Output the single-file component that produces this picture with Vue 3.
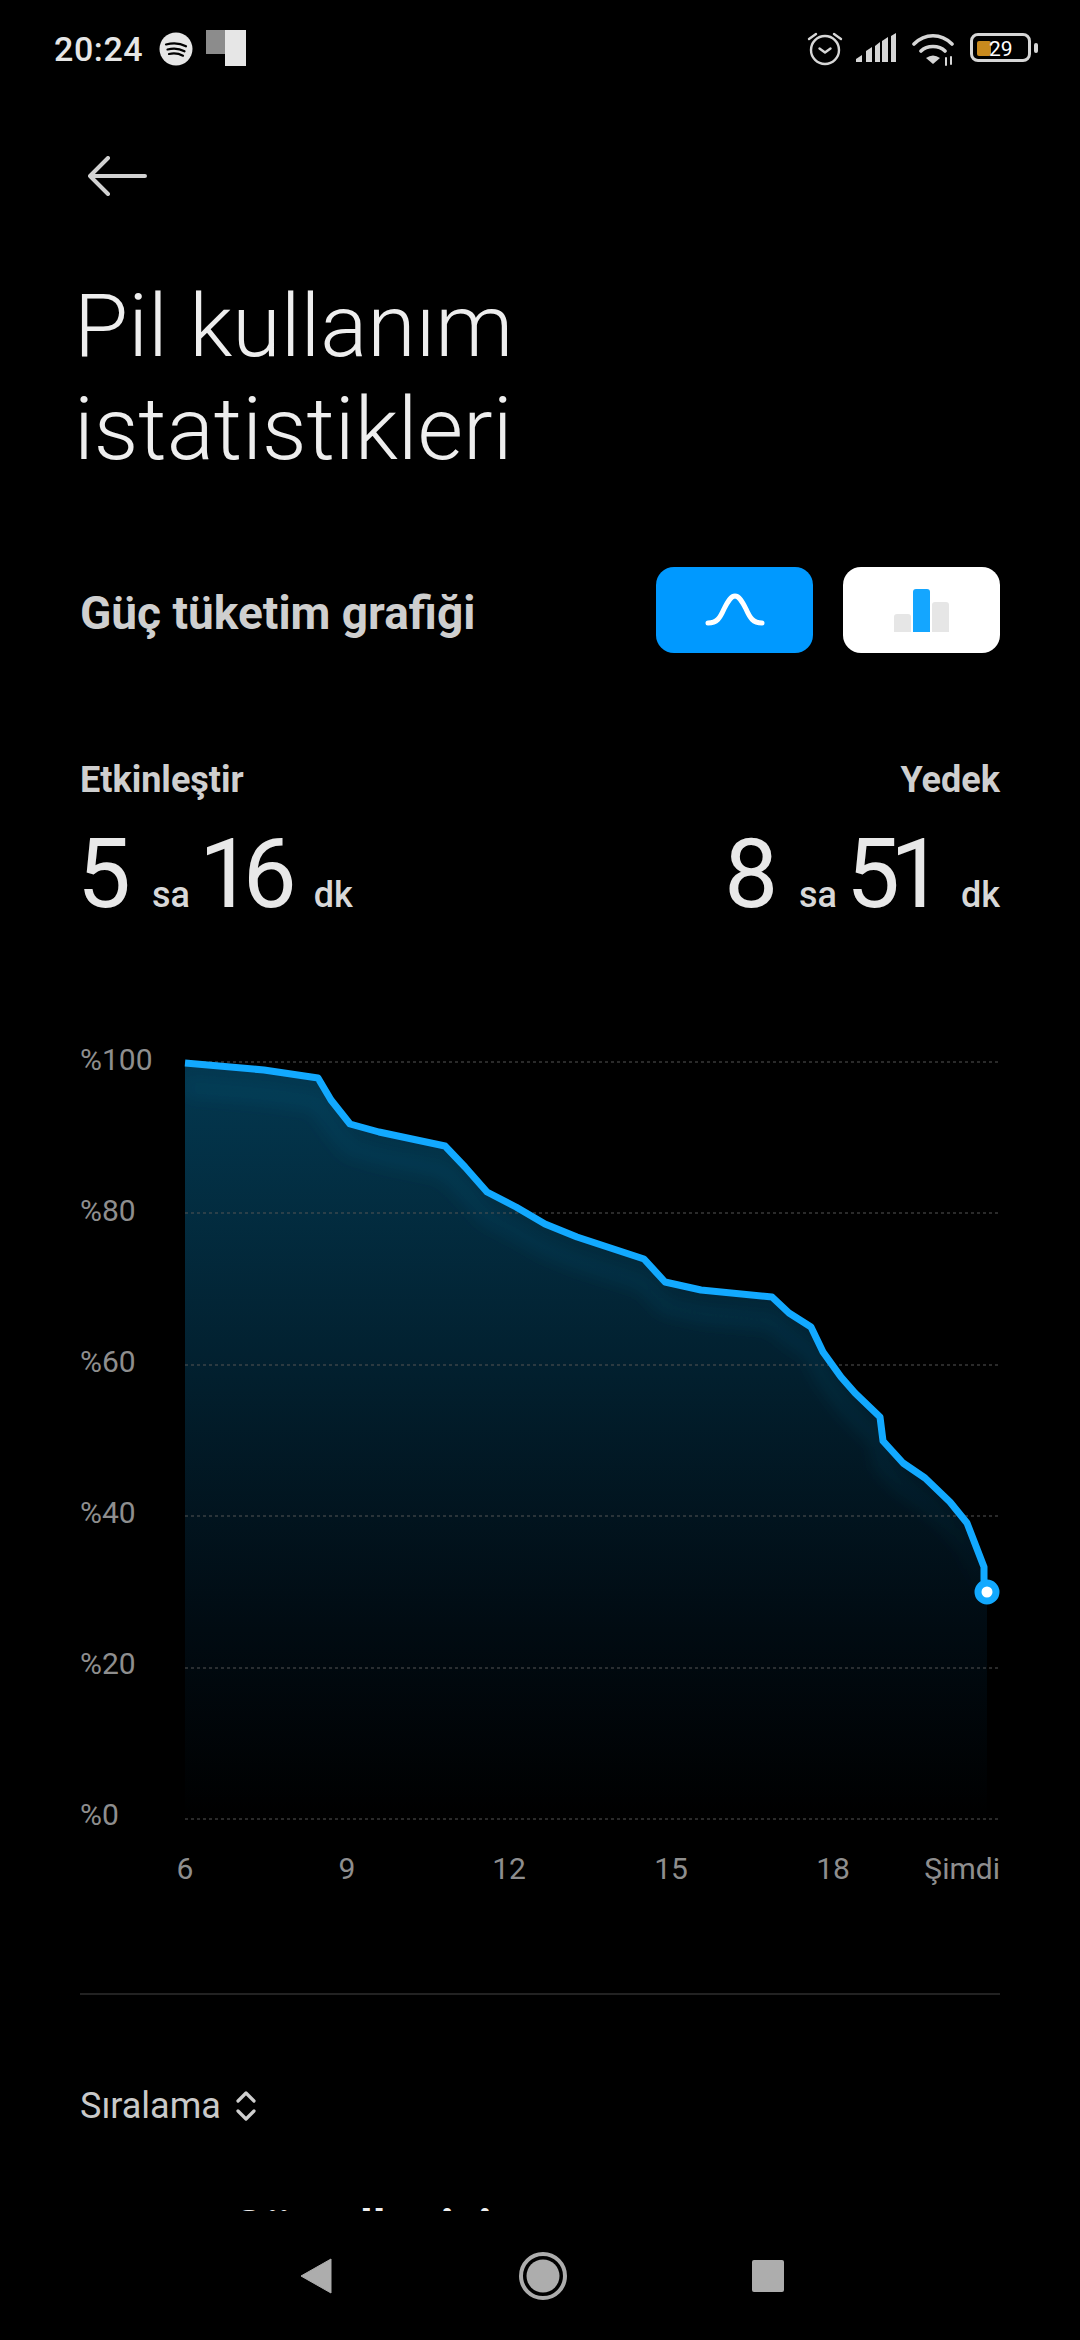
<template>
  <div class="page">
    <div class="statusbar">
      <div class="status-left">
        <span class="clock">20:24</span>
        <svg class="spotify" width="34" height="34" viewBox="0 0 34 34">
          <circle cx="17" cy="17" r="16.5" fill="#e6e6e6" />
          <path d="M7 12.500c7-2 14-1.500 20 1.800M8.500 17.500c6-1.600 12-1 17 1.800M10 22c5-1.200 9.500-.7 14 1.700" fill="none" stroke="#000" stroke-width="2.200" stroke-linecap="round" />
        </svg>
        <div class="notif-icon">
          <div class="notif-back"></div>
          <div class="notif-front"></div>
        </div>
      </div>
      <div class="status-right">
        <svg class="alarm" width="36" height="34" viewBox="0 0 36 34" fill="none" stroke="#d6d6d6" stroke-width="2.400">
          <circle cx="18" cy="18" r="14" />
          <path d="M12.500 16.500l5.500 4 5.500-4M2 7l7-5M34 7l-7-5" stroke-linecap="round" stroke-linejoin="round" />
        </svg>
        <svg width="40" height="29" viewBox="0 0 40 29" fill="#d6d6d6">
          <path d="M0 29v-3l6-4v7zM10 29V18l6-4v15zM19 29V13l5-4v20zM26 29V8l6-4v25zM35 29V3l5-3v29z" />
        </svg>
        <svg width="42" height="33" viewBox="0 0 42 33" fill="none" stroke="#d6d6d6" stroke-linecap="round">
          <path d="M2 11C13 0 29 0 40 11M9 18C15 12 27 12 33 18" stroke-width="3.600" />
          <path d="M14 25Q21 20 28 25L21 31z" fill="#d6d6d6" stroke="none" />
          <path d="M34 25v7M39 24v7" stroke-width="2" />
        </svg>
        <div class="battery">
          <div class="battery-body">
            <div class="battery-fill"></div>
            <span class="battery-num">29</span>
          </div>
          <div class="battery-tip"></div>
        </div>
      </div>
    </div>

    <div class="scroll">
      <svg class="back" width="60" height="40" viewBox="0 0 60 40" fill="none" stroke="#d2d2d2" stroke-width="4" stroke-linecap="round" stroke-linejoin="round">
        <path d="M2 20h55M20 2L2 20l18 18" />
      </svg>

      <h1 class="title">Pil kullanım<br />istatistikleri</h1>

      <div class="section-head">
        <span class="section-title">Güç tüketim grafiği</span>
        <div class="toggles">
          <div class="toggle toggle-on">
            <svg width="60" height="36" viewBox="0 0 60 36" fill="none" stroke="#fff" stroke-width="5" stroke-linecap="round">
              <path d="M3 31c9 0 12-5 16-14 4-8 7-13 11-13s7 5 11 13c4 9 7 14 16 14" />
            </svg>
          </div>
          <div class="toggle toggle-off">
            <div class="bars">
              <div v-for="bar in bars" :key="bar.h" class="bar" :class="bar.cls" :style="{ height: bar.h + 'px' }"></div>
            </div>
          </div>
        </div>
      </div>

      <div class="stats">
        <div class="stat" v-for="s in stats" :key="s.label" :class="s.cls">
          <div class="stat-label">{{ s.label }}</div>
          <div class="stat-value">
            <span class="num">{{ s.h }}</span><span class="unit">sa</span><span class="num">{{ s.m }}</span><span class="unit">dk</span>
          </div>
        </div>
      </div>

      <svg class="chart" width="1080" height="860" viewBox="0 0 1080 860">
        <defs>
          <linearGradient id="areaFill" x1="0" y1="0" x2="0" y2="1">
            <stop offset="0" stop-color="#033850" />
            <stop offset="0.4" stop-color="#02202f" />
            <stop offset="0.75" stop-color="#010b12" />
            <stop offset="1" stop-color="#000" />
          </linearGradient>
          <linearGradient id="glowFade" x1="0" y1="0" x2="0" y2="1">
            <stop offset="0" stop-color="#0b5f85" stop-opacity="0.2" />
            <stop offset="0.7" stop-color="#0b5f85" stop-opacity="0.15" />
            <stop offset="1" stop-color="#0b5f85" stop-opacity="0" />
          </linearGradient>
          <filter id="soft" x="-10%" y="-10%" width="120%" height="120%">
            <feGaussianBlur stdDeviation="8" />
          </filter>
          <clipPath id="areaClip">
            <path :d="areaPath" />
          </clipPath>
        </defs>

        <path :d="areaPath" fill="url(#areaFill)" />
        <g clip-path="url(#areaClip)">
          <path :d="linePath" transform="translate(0 24)" fill="none" stroke="url(#glowFade)" stroke-width="16" filter="url(#soft)" />
        </g>

        <g v-for="g in grid" :key="g.label">
          <line x1="185" x2="999" :y1="g.y" :y2="g.y" stroke="#555" stroke-width="1" stroke-dasharray="3 3" />
          <text x="80" :y="g.ty" class="axis">{{ g.label }}</text>
        </g>

        <path :d="linePath" fill="none" stroke="#12a9ff" stroke-width="7" stroke-linejoin="round" />
        <circle cx="987" :cy="dotY" r="9" fill="#fff" stroke="#12a9ff" stroke-width="7" />

        <text v-for="t in ticks" :key="t.label" :x="t.x" y="849" :text-anchor="t.anchor" class="axis">{{ t.label }}</text>
      </svg>

      <div class="divider"></div>

      <div class="sort">
        <span>Sıralama</span>
        <svg width="20" height="30" viewBox="0 0 20 30" fill="none" stroke="#cfcfcf" stroke-width="3.200" stroke-linecap="round" stroke-linejoin="round">
          <path d="M2 10l8-8 8 8M2 20l8 8 8-8" />
        </svg>
      </div>

      <div class="first-row">Görseller için</div>
    </div>

    <div class="navbar">
      <svg width="34" height="36" viewBox="0 0 34 36"><path d="M31 1v34L1 18z" fill="#adadad" stroke="#adadad" stroke-width="1" stroke-linejoin="round" /></svg>
      <svg width="48" height="48" viewBox="0 0 48 48">
        <circle cx="24" cy="24" r="22" fill="none" stroke="#adadad" stroke-width="4" />
        <circle cx="24" cy="24" r="16.500" fill="#adadad" />
      </svg>
      <div class="nav-square"></div>
    </div>
  </div>
</template>

<script setup>
// chart top offset on the page, points below are in page coordinates
const top = 1030

const points = [
  [185, 1063], [264, 1070], [318, 1078], [331, 1100], [350, 1124], [379, 1132],
  [445, 1146], [465, 1167], [487, 1192], [516, 1207], [545, 1224], [577, 1237],
  [644, 1259], [665, 1282], [701, 1290], [772, 1297], [789, 1313], [811, 1327],
  [823, 1352], [841, 1377], [855, 1393], [880, 1417], [883, 1441], [903, 1463],
  [925, 1478], [950, 1502], [967, 1523], [984, 1567], [984, 1580], [987, 1592]
].map(([x, y]) => [x, y - top])

const linePath = 'M' + points.map(p => p.join(' ')).join('L')
const areaPath = linePath + `L987 ${1819 - top}L185 ${1819 - top}Z`
const dotY = 1592 - top

const grid = [
  { label: '%100', y: 32, ty: 40 },
  { label: '%80', y: 183, ty: 191 },
  { label: '%60', y: 335, ty: 342 },
  { label: '%40', y: 486, ty: 493 },
  { label: '%20', y: 638, ty: 644 },
  { label: '%0', y: 789, ty: 795 }
]

const ticks = [
  { label: '6', x: 185, anchor: 'middle' },
  { label: '9', x: 347, anchor: 'middle' },
  { label: '12', x: 509, anchor: 'middle' },
  { label: '15', x: 671, anchor: 'middle' },
  { label: '18', x: 833, anchor: 'middle' },
  { label: 'Şimdi', x: 1000, anchor: 'end' }
]

const bars = [
  { h: 18, cls: 'bar-grey' },
  { h: 43, cls: 'bar-blue' },
  { h: 30, cls: 'bar-grey' }
]

const stats = [
  { label: 'Etkinleştir', h: '5', m: '16', cls: '' },
  { label: 'Yedek', h: '8', m: '51', cls: 'stat-right' }
]
</script>

<style>
html, body {
  margin: 0;
  background: #000;
}
</style>

<style scoped>
.page {
  width: 1080px;
  height: 2340px;
  background: #000;
  color: #e6e6e6;
  font-family: Roboto, "Noto Sans", sans-serif;
  overflow: hidden;
  display: flex;
  flex-direction: column;
}

.statusbar {
  height: 96px;
  flex: none;
  padding: 27px 42px 0 54px;
  box-sizing: border-box;
  display: flex;
  justify-content: space-between;
  align-items: flex-start;
}

.status-left {
  display: flex;
  align-items: center;
  gap: 16px;
}

.clock {
  font-size: 34px;
  font-weight: 500;
  letter-spacing: 0.6px;
  line-height: 44px;
}

.notif-icon {
  position: relative;
  width: 40px;
  height: 36px;
  margin-left: -3px;
  margin-top: -2px;
}

.notif-back {
  position: absolute;
  left: 0;
  top: 0;
  width: 20px;
  height: 24px;
  background: #8c8c8c;
}

.notif-front {
  position: absolute;
  left: 19px;
  top: 0;
  width: 21px;
  height: 36px;
  background: #e6e6e6;
}

.status-right {
  display: flex;
  align-items: flex-start;
  gap: 16px;
  padding-top: 6px;
}

.alarm {
  margin: -1px -3px 0 0;
}

.battery {
  display: flex;
  align-items: center;
  gap: 3px;
}

.battery-body {
  position: relative;
  width: 55px;
  height: 23px;
  border: 3px solid #d6d6d6;
  border-radius: 8px;
}

.battery-fill {
  position: absolute;
  left: 4px;
  top: 5px;
  bottom: 3px;
  width: 14px;
  background: #c98a1e;
  border-radius: 2px;
}

.battery-num {
  position: absolute;
  left: 16px;
  top: -1px;
  font-size: 21px;
  line-height: 29px;
  color: #fff;
}

.battery-tip {
  width: 4px;
  height: 10px;
  background: #d6d6d6;
  border-radius: 2px;
}

.scroll {
  flex: 1;
  min-height: 0;
  overflow: hidden;
}

.back {
  display: block;
  margin: 60px 0 0 88px;
}

.title {
  margin: 78px 0 0 74px;
  font-size: 88px;
  font-weight: 300;
  line-height: 103px;
  color: #eee;
}

.section-head {
  margin-top: 87px;
  padding: 0 80px;
  display: flex;
  justify-content: space-between;
  align-items: center;
}

.section-title {
  font-size: 46px;
  font-weight: 700;
  color: #cfcfcf;
  padding-top: 5px;
}

.toggles {
  display: flex;
  gap: 30px;
}

.toggle {
  width: 157px;
  height: 86px;
  border-radius: 18px;
  display: flex;
  align-items: center;
  justify-content: center;
}

.toggle-on {
  background: #0099ff;
}

.toggle-off {
  background: #fff;
}

.bars {
  display: flex;
  align-items: flex-end;
  gap: 2px;
  height: 43px;
}

.bar {
  width: 17px;
  border-radius: 3px 3px 0 0;
}

.bar-grey {
  background: #e6e6e6;
}

.bar-blue {
  background: #14a6ff;
}

.stats {
  margin-top: 107px;
  padding: 0 80px;
  display: flex;
  justify-content: space-between;
}

.stat-right {
  text-align: right;
}

.stat-label {
  font-size: 36px;
  font-weight: 700;
  color: #cfcfcf;
  line-height: 40px;
}

.stat-value {
  margin: 29px 0 0 -3px;
  line-height: 90px;
}

.num {
  font-size: 96px;
  font-weight: 450;
  letter-spacing: -10px;
  color: #e8e8e8;
}

.unit {
  font-size: 36px;
  font-weight: 500;
  color: #d8d8d8;
  margin: 0 9px 0 31px;
}

.stat-value .unit:last-child {
  margin-right: 0;
  margin-left: 27px;
}

.chart {
  display: block;
  margin-top: 83px;
}

.axis {
  font-family: Roboto, "Noto Sans", sans-serif;
  font-size: 30px;
  fill: #8e8e8e;
}

.divider {
  margin: 103px 80px 0;
  height: 2px;
  background: #222;
}

.sort {
  margin: 90px 0 0 80px;
  display: flex;
  align-items: center;
  gap: 15px;
  font-size: 36px;
  color: #c9c9c9;
}

.first-row {
  margin: 72px 0 0 232px;
  font-size: 48px;
  font-weight: 700;
  color: #eee;
}

.navbar {
  flex: none;
  height: 129px;
  padding-left: 300px;
  box-sizing: border-box;
  display: flex;
  align-items: center;
  background: #000;
  gap: 185px;
}

.nav-square {
  width: 32px;
  height: 32px;
  border-radius: 2px;
  background: #adadad;
}
</style>
